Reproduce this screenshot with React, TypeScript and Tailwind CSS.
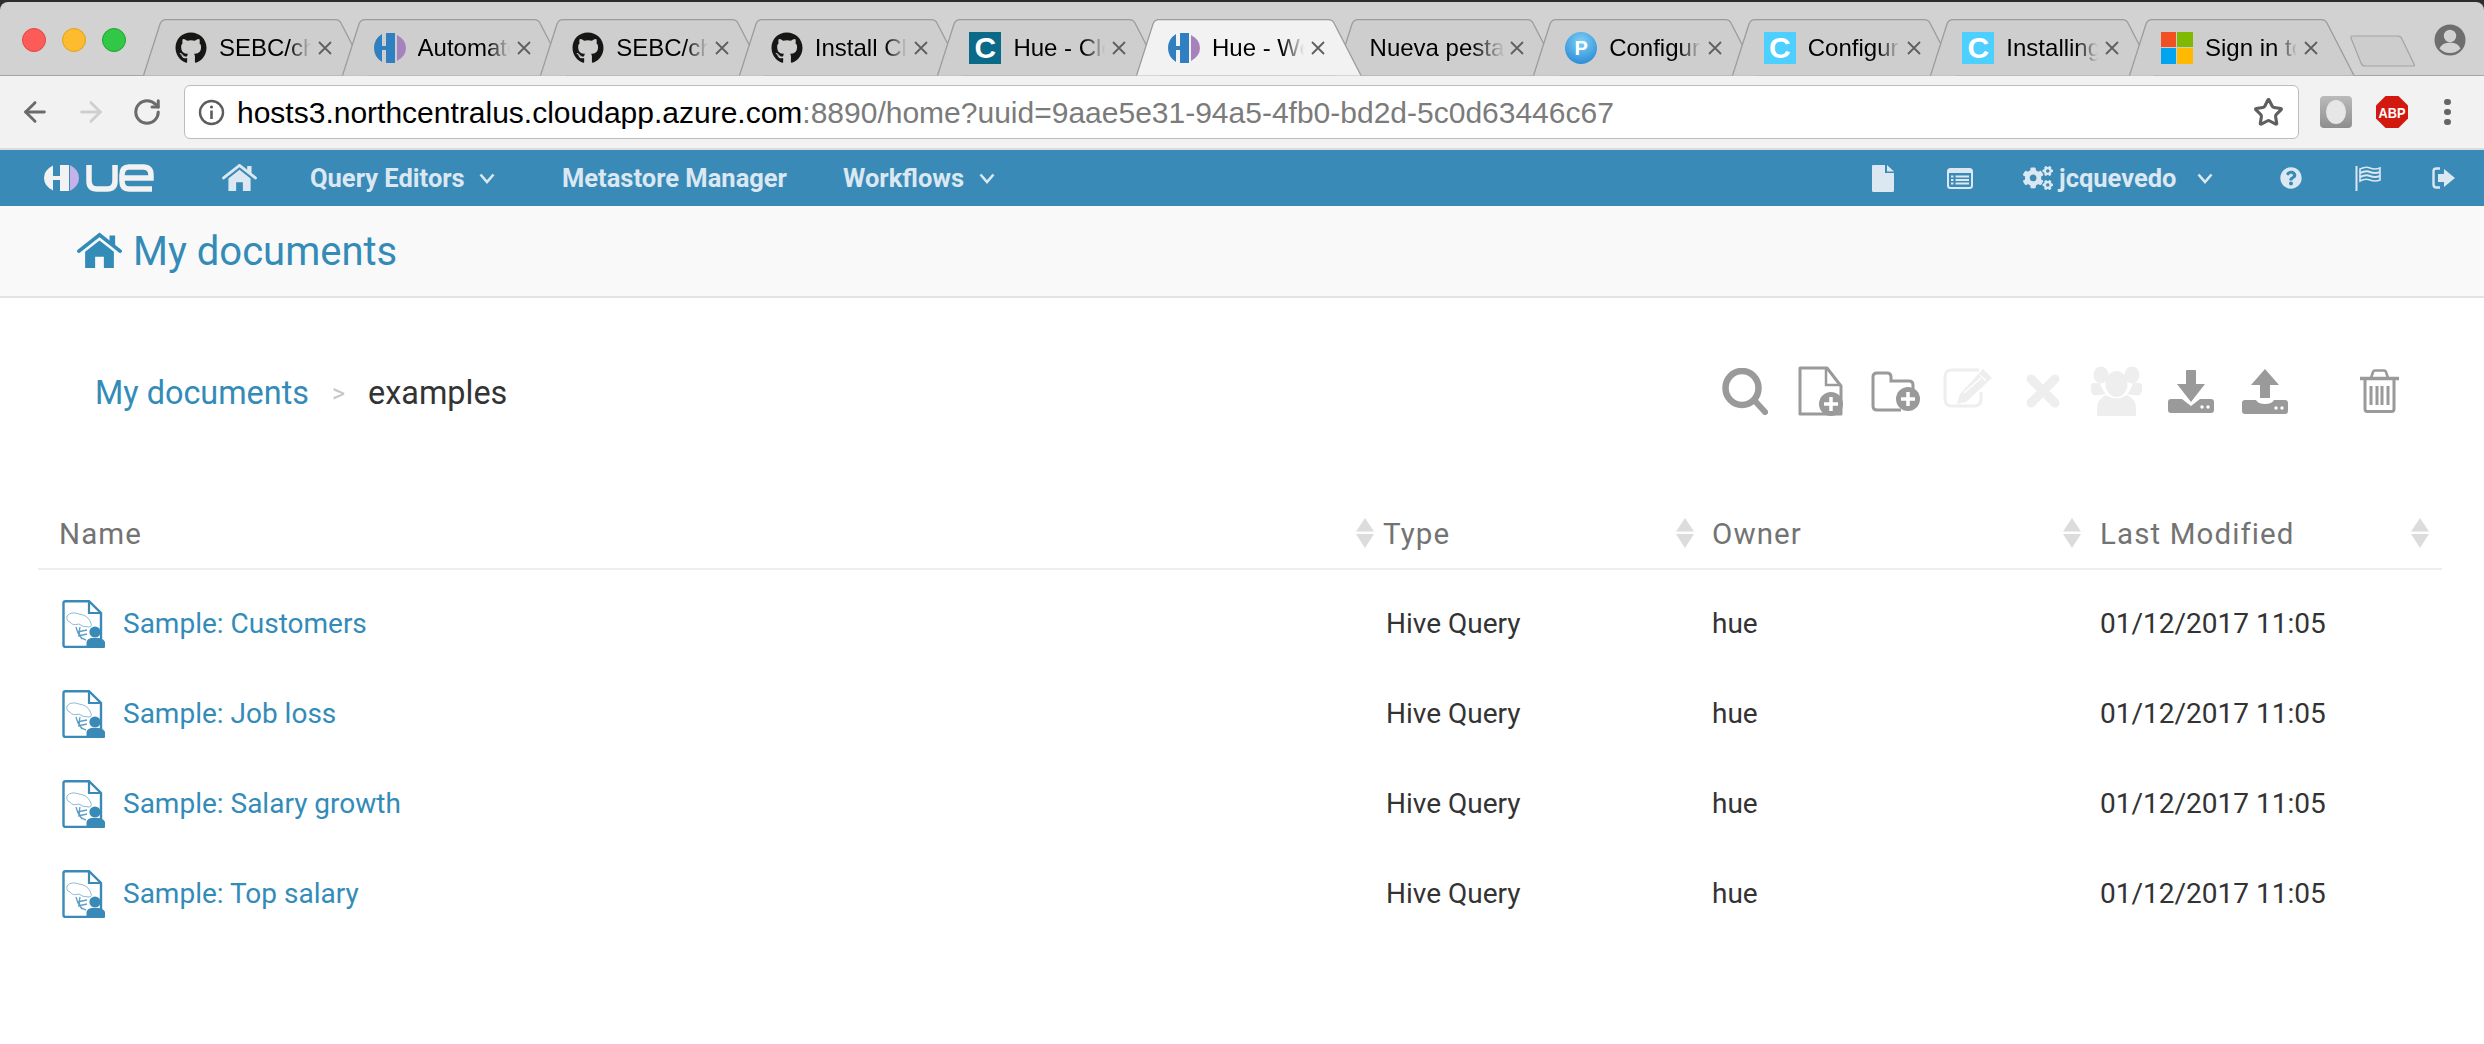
import React from "react";
import { FaGithub, FaCogs, FaQuestionCircle } from "react-icons/fa";
import { ArrowLeft, ArrowRight, RotateCw, Star } from "lucide-react";

const Hex = ({ size = 32, a = "#2f7fc1", b = "#a682bd" }: { size?: number; a?: string; b?: string }) => (
  <svg width={size} height={size} viewBox="0 0 32 32">
    <path d="M8 2 Q0 7 0 16 Q0 25 8 30 L8 18 L12 18 L12 31 L21 31 L21 1 L12 1 L12 14 L8 14 Z" fill={a} />
    <path d="M23 3 Q32 8 32 16 Q32 24 23 29 Z" fill={b} />
  </svg>
);

const HueLogo = () => (
  <svg width="111" height="28" viewBox="0 0 111 28" fill="none">
    <path d="M9 1.5 Q0 6 0 14 Q0 22 9 26.5 L9 16 L16 16 L16 27 L25 27 L25 1 L16 1 L16 12 L9 12 Z" fill="#f2f2f2" />
    <path d="M26 1 Q35 6 35 14 Q35 22 26 27 Z" fill="#c4b3e8" />
    <path d="M45 1 V17 Q45 25 53 25 H63 Q71 25 71 17 V1" stroke="#f2f2f2" strokeWidth="5.5" />
    <path d="M108 25 H85 Q78 25 78 17 V11 Q78 3 85 3 H99 Q107 3 107 11 V14 H78" stroke="#f2f2f2" strokeWidth="5.5" />
  </svg>
);

const HomeIcon = ({ w, h, color }: { w: number; h: number; color: string }) => (
  <svg width={w} height={h} viewBox="0 0 36 28">
    <path d="M1.5 14.5 L18 1.5 L34.5 14.5" fill="none" stroke={color} strokeWidth="3" strokeLinecap="round" />
    <path d="M26 2 H30.5 V10 L26 6.5 Z" fill={color} />
    <path d="M6.5 15 L18 6 L29.5 15 V28 H21.5 V19 H14.5 V28 H6.5 Z" fill={color} />
  </svg>
);

const Chevron = () => (
  <svg width="16" height="11" viewBox="0 0 16 11" fill="none" className="shrink-0">
    <path d="M1.5 1.5 L8 9 L14.5 1.5" stroke="#dbe8f1" strokeWidth="2.6" />
  </svg>
);

const Favicon = ({ kind }: { kind: string }) => {
  if (kind === "gh") return <FaGithub size={32} color="#161614" />;
  if (kind === "hue") return <Hex />;
  if (kind === "c1" || kind === "c2")
    return (
      <div className={`flex h-[32px] w-[32px] items-center justify-center text-[30px] font-bold leading-none text-white ${kind === "c1" ? "bg-[#0b6a87]" : "bg-[#4dd0ff]"}`}>
        C
      </div>
    );
  if (kind === "p")
    return (
      <div className="flex h-[32px] w-[32px] items-center justify-center rounded-full bg-[radial-gradient(circle_at_50%_30%,#7fd0f7,#1a7fd0)] text-[20px] font-bold leading-none text-white">
        P
      </div>
    );
  if (kind === "ms")
    return (
      <div className="grid h-[32px] w-[32px] grid-cols-2 gap-[1px]">
        <div className="bg-[#f25022]" />
        <div className="bg-[#7fba00]" />
        <div className="bg-[#00a4ef]" />
        <div className="bg-[#ffb900]" />
      </div>
    );
  return null;
};

const tabs = [
  { kind: "gh", title: "SEBC/chef-bcpc" },
  { kind: "hue", title: "Automated install" },
  { kind: "gh", title: "SEBC/chef-bcpc" },
  { kind: "gh", title: "Install Cloudera" },
  { kind: "c1", title: "Hue - Cloudera" },
  { kind: "hue", title: "Hue - Welcome", active: true },
  { kind: "", title: "Nueva pestaña" },
  { kind: "p", title: "Configure" },
  { kind: "c2", title: "Configure" },
  { kind: "c2", title: "Installing Hive" },
  { kind: "ms", title: "Sign in to your" },
];

const Tab = ({ kind, title, active }: { kind: string; title: string; active?: boolean }) => (
  <div className={`relative h-[56px] w-[198.6px] shrink-0 ${active ? "z-10" : ""}`}>
    <svg className="absolute left-0 top-0" width="226" height="57" viewBox="0 0 226 57">
      <path
        d="M0.5 56.5 L17 5 Q18.5 0.7 23 0.7 L192 0.7 Q197 0.7 198.5 5 L225 56.5"
        fill={active ? "#f2f2f2" : "#cecece"}
        stroke="#9c9c9c"
        strokeWidth="1.3"
      />
    </svg>
    <div className="absolute left-[32px] top-[13px] flex h-[31px] items-center">
      {kind ? (
        <div className="mr-[12px] h-[32px] w-[32px] shrink-0">
          <Favicon kind={kind} />
        </div>
      ) : null}
      <div className={`h-[34px] overflow-hidden whitespace-nowrap text-[24px] leading-[34px] text-black [mask-image:linear-gradient(to_right,black_76%,transparent)] ${kind ? "w-[92px]" : "ml-[3px] w-[135px]"}`}>
        {title}
      </div>
    </div>
    <svg className="absolute left-[175px] top-[22px]" width="14" height="14" viewBox="0 0 14 14">
      <path d="M1 1 L13 13 M13 1 L1 13" stroke="#5f5f5f" strokeWidth="1.8" />
    </svg>
  </div>
);

const NewFileIcon = () => (
  <svg width="45" height="50" viewBox="0 0 45 50" fill="none">
    <path d="M2 2 H29 L43 20 V48 H2 Z" stroke="#9a9a9a" strokeWidth="3" strokeLinejoin="round" />
    <path d="M28 3 V19 H42" stroke="#9a9a9a" strokeWidth="2.5" />
    <circle cx="33" cy="38" r="12" fill="#9a9a9a" />
    <path d="M33 31 V45 M26 38 H40" stroke="#fff" strokeWidth="3.5" />
  </svg>
);
const NewFolderIcon = () => (
  <svg width="49" height="41" viewBox="0 0 49 41" fill="none">
    <path d="M42 30 V14 Q42 10 38 10 H20 V6 Q20 2 16 2 H6 Q2 2 2 6 V35 Q2 39 6 39 H30" stroke="#9a9a9a" strokeWidth="3" />
    <circle cx="37" cy="28" r="12" fill="#9a9a9a" />
    <path d="M37 21 V35 M30 28 H44" stroke="#fff" strokeWidth="3.5" />
  </svg>
);
const EditIcon = () => (
  <svg width="50" height="40" viewBox="0 0 50 40" fill="none">
    <path d="M36 2 H9 Q2 2 2 9 V31 Q2 38 9 38 H31 Q38 38 38 31 V24" stroke="#eee" strokeWidth="3" />
    <path d="M40 1 L49 10 L23 34 L14 36 L17 26 Z" fill="#eee" />
    <path d="M37 7 L43 13 M21 25 L38 10" stroke="#fff" strokeWidth="1.3" />
  </svg>
);
const XIcon = () => (
  <svg width="34" height="34" viewBox="0 0 34 34">
    <path d="M5 5 L29 29 M29 5 L5 29" stroke="#eee" strokeWidth="9" strokeLinecap="round" />
  </svg>
);
const UsersIcon = () => (
  <svg width="53" height="50" viewBox="0 0 53 50">
    <ellipse cx="11" cy="9" rx="7.5" ry="8.5" fill="#eee" />
    <ellipse cx="42" cy="9" rx="7.5" ry="8.5" fill="#eee" />
    <path d="M1 18 Q5 16 10 17 Q12 24 16 28 Q8 30 3 29 Q0 25 1 18 Z" fill="#eee" />
    <path d="M52 18 Q48 16 43 17 Q41 24 37 28 Q45 30 50 29 Q53 25 52 18 Z" fill="#eee" />
    <ellipse cx="26.5" cy="18" rx="11" ry="13" fill="#eee" />
    <path d="M7 50 V42 Q7 33 16 29 Q26 36 37 29 Q46 33 46 42 V50 Z" fill="#eee" />
  </svg>
);
const DownloadIcon = () => (
  <svg width="46" height="43" viewBox="0 0 46 43">
    <path d="M18 1 Q18 0 19 0 H27 Q28 0 28 1 V14 H37 L23 32 L9 14 H18 Z" fill="#9a9a9a" />
    <path d="M0 32 Q0 29 3 29 H14 L23 36 L32 29 H43 Q46 29 46 32 V40 Q46 43 43 43 H3 Q0 43 0 40 Z" fill="#9a9a9a" />
    <circle cx="34" cy="37" r="1.7" fill="#fff" />
    <circle cx="40" cy="37" r="1.7" fill="#fff" />
  </svg>
);
const UploadIcon = () => (
  <svg width="46" height="45" viewBox="0 0 46 45">
    <path d="M23 0 L37 16 H28 V29 H18 V16 H9 Z" fill="#9a9a9a" />
    <path d="M0 34 Q0 31 3 31 H14 Q16 35 23 35 Q30 35 32 31 H43 Q46 31 46 34 V42 Q46 45 43 45 H3 Q0 45 0 42 Z" fill="#9a9a9a" />
    <circle cx="34" cy="39" r="1.7" fill="#fff" />
    <circle cx="40" cy="39" r="1.7" fill="#fff" />
  </svg>
);
const TrashIcon = () => (
  <svg width="39" height="44" viewBox="0 0 39 44" fill="none">
    <path d="M0 9.5 H39" stroke="#9a9a9a" strokeWidth="3.4" />
    <path d="M11 9 L13 3 Q13.5 1.5 15 1.5 H24 Q25.5 1.5 26 3 L28 9" stroke="#9a9a9a" strokeWidth="2.6" />
    <path d="M5 10 V40 Q5 42.5 7.5 42.5 H31.5 Q34 42.5 34 40 V10" stroke="#9a9a9a" strokeWidth="3" />
    <path d="M11 17 V36 M17 17 V36 M22 17 V36 M28 17 V36" stroke="#9a9a9a" strokeWidth="3" />
  </svg>
);
const SearchIcon = () => (
  <svg width="46" height="47" viewBox="0 0 46 47" fill="none">
    <ellipse cx="20" cy="20" rx="16.5" ry="17" stroke="#9a9a9a" strokeWidth="6.5" />
    <path d="M33 33 L43 44" stroke="#9a9a9a" strokeWidth="6" strokeLinecap="round" />
  </svg>
);

const SortArrows = () => (
  <svg width="18" height="30" viewBox="0 0 18 30" className="shrink-0">
    <path d="M9 0 L18 13.5 H0 Z" fill="#dcdcdc" />
    <path d="M0 16 H18 L9 30 Z" fill="#dcdcdc" />
  </svg>
);

const HiveDoc = () => (
  <svg width="44" height="48" viewBox="0 0 44 48" fill="none" className="shrink-0">
    <path d="M1.5 3 Q1.5 1.2 3.5 1.2 H27 L39 13 V42" stroke="#3a8ab8" strokeWidth="2.4" />
    <path d="M1.5 3 V45 Q1.5 47 3.5 47 H27" stroke="#3a8ab8" strokeWidth="2.4" />
    <path d="M27 2 V13 H39" stroke="#3a8ab8" strokeWidth="2.2" />
    <path d="M5 16 Q9 11 17 14 Q25 15 28 21 Q31 27 27 27 Q20 27 17 24 Q10 26 8 22 Q4 21 5 16 Z" stroke="#8dbcd7" strokeWidth="1" />
    <path d="M14 27 Q17 39 24 40 M18 27 Q16 35 20 39 M15 32 L25 30 M16 36 L25 34" stroke="#5f9fc4" strokeWidth="1.3" />
    <circle cx="33" cy="32" r="5.6" fill="#3a8ab8" />
    <path d="M24.5 48 V42 Q25 39 29 38 H37 Q42 39 43 42 V47 Q43 48 42 48 Z" fill="#3a8ab8" />
  </svg>
);

const rows = ["Sample: Customers", "Sample: Job loss", "Sample: Salary growth", "Sample: Top salary"];

const navText = "text-[25.5px] font-bold leading-[58px] text-[#dbe8f1] whitespace-nowrap";

export default function App() {
  return (
    <div className="min-h-[1044px] w-[2484px] overflow-hidden bg-white font-['Roboto',sans-serif]">
      {/* Browser chrome */}
      <div className="bg-[#2d2d2d] pt-[2px] font-['Liberation_Sans',sans-serif]">
        <div className="relative flex h-[74px] items-end border-b border-[#a6a6a6] rounded-t-[8px] bg-[#d2d2d2] pl-[143px]">
          <div className="absolute left-[22px] top-[26px] flex gap-[16px]">
            <div className="h-[24px] w-[24px] rounded-full border border-[#e2463f] bg-[#fc5b57]" />
            <div className="h-[24px] w-[24px] rounded-full border border-[#e1a116] bg-[#fdbc2f]" />
            <div className="h-[24px] w-[24px] rounded-full border border-[#17a82c] bg-[#33c748]" />
          </div>
          {tabs.map((t, i) => (
            <Tab key={i} kind={t.kind} title={t.title} active={t.active} />
          ))}
          <svg className="absolute left-[2350px] top-[33px]" width="66" height="32" viewBox="0 0 66 32" fill="none">
            <path d="M2 1 H48 Q51 1 52 4 L64.5 30 Q65 31 63 31 H15 Q12 31 11 28 L1 3 Q0.5 1 2 1 Z" fill="#cdcdcd" stroke="#a4a4a4" strokeWidth="1.2" />
          </svg>
          <svg className="absolute left-[2434px] top-[22px]" width="32" height="32" viewBox="0 0 32 32">
            <circle cx="16" cy="16" r="15.5" fill="#6e6e6e" />
            <circle cx="16" cy="12" r="6.2" fill="#d2d2d2" />
            <path d="M5.5 24.5 Q8 18.5 16 18.5 Q24 18.5 26.5 24.5 Q22 29 16 29 Q10 29 5.5 24.5 Z" fill="#d2d2d2" />
          </svg>
        </div>
        <div className="relative flex h-[74px] items-center border-b-2 border-[#dcdcdc] bg-[#f2f2f2]">
          <div className="flex w-[184px] shrink-0 items-center pl-[19px]">
            <ArrowLeft size={32} strokeWidth={2.2} color="#6b6b6b" />
            <ArrowRight size={32} strokeWidth={2.2} color="#cfcfcf" className="ml-[24px]" />
            <RotateCw size={30} strokeWidth={2.4} color="#6b6b6b" className="ml-[25px]" />
          </div>
          <div className="flex h-[54px] w-[2115px] shrink-0 items-center rounded-[6px] border border-[#bcbcbc] bg-white pl-[13px] pr-[14px]">
            <svg width="27" height="27" viewBox="0 0 27 27" fill="none" className="shrink-0">
              <circle cx="13.5" cy="13.5" r="11.5" stroke="#5d5d5d" strokeWidth="2.4" />
              <circle cx="13.5" cy="8" r="1.6" fill="#5d5d5d" />
              <path d="M13.5 11.5 V20" stroke="#5d5d5d" strokeWidth="2.6" />
            </svg>
            <div className="ml-[12px] whitespace-nowrap text-[30px] text-[#7b7b7b]">
              <span className="text-black">hosts3.northcentralus.cloudapp.azure.com</span>:8890/home?uuid=9aae5e31-94a5-4fb0-bd2d-5c0d63446c67
            </div>
            <Star size={31} strokeWidth={2.4} color="#5f5f5f" className="ml-auto shrink-0" />
          </div>
          <div className="ml-[21px] flex h-[32px] w-[32px] shrink-0 items-center justify-center rounded-[4px] bg-[linear-gradient(#bbb,#8e8e8e)]">
            <div className="h-[24px] w-[20px] rounded-[50%] bg-[#e6e6e6]" />
          </div>
          <svg className="ml-[24px] shrink-0" width="32" height="32" viewBox="0 0 32 32">
            <path d="M9.5 0 H22.5 L32 9.5 V22.5 L22.5 32 H9.5 L0 22.5 V9.5 Z" fill="#d3190f" />
            <text x="16" y="22" fill="#fff" fontSize="15.5" fontWeight="700" textAnchor="middle" fontFamily="Liberation Sans, sans-serif" textLength="27" lengthAdjust="spacingAndGlyphs">ABP</text>
          </svg>
          <div className="ml-[36px] flex shrink-0 flex-col gap-[3.5px]">
            <div className="h-[6.5px] w-[6.5px] rounded-full bg-[#666]" />
            <div className="h-[6.5px] w-[6.5px] rounded-full bg-[#666]" />
            <div className="h-[6.5px] w-[6.5px] rounded-full bg-[#666]" />
          </div>
        </div>
      </div>

      {/* Hue nav */}
      <div className="flex h-[56px] items-center bg-[#3a8ab8] pr-[29px]">
        <div className="ml-[44px] shrink-0"><HueLogo /></div>
        <div className="ml-[67px] shrink-0 -translate-y-[1px]"><HomeIcon w={35} h={27} color="#dbe8f1" /></div>
        <div className={`ml-[53px] flex w-[185px] shrink-0 items-center justify-between ${navText}`}>
          Query Editors <Chevron />
        </div>
        <div className={`ml-[67px] w-[228px] shrink-0 ${navText}`}>Metastore Manager</div>
        <div className={`ml-[53px] flex w-[152px] shrink-0 items-center justify-between ${navText}`}>
          Workflows <Chevron />
        </div>
        <div className="ml-auto flex items-center">
          <svg width="22" height="27" viewBox="0 0 22 27" className="shrink-0">
            <path d="M1 0 H13 V8 H22 V25.5 Q22 27 20.5 27 H1.5 Q0 27 0 25.5 V1 Q0 0 1 0 Z M15 0 L22 6.5 H15 Z" fill="#dbe8f1" />
          </svg>
          <svg className="ml-[53px] shrink-0" width="26" height="21" viewBox="0 0 26 21" fill="none">
            <rect x="1" y="1" width="24" height="19" rx="2.5" stroke="#dbe8f1" strokeWidth="2" />
            <path d="M1 2 H25 V5 H1 Z" fill="#dbe8f1" />
            <path d="M4 8.5 H6.5 M8.5 8.5 H22 M4 12 H6.5 M8.5 12 H22 M4 15.5 H6.5 M8.5 15.5 H22" stroke="#dbe8f1" strokeWidth="1.8" />
          </svg>
          <FaCogs className="ml-[50px] shrink-0" size={30} color="#dbe8f1" />
          <div className={`ml-[6px] w-[119px] shrink-0 ${navText}`}>jcquevedo</div>
          <div className="ml-[19px] shrink-0"><Chevron /></div>
          <FaQuestionCircle className="ml-[67px] shrink-0" size={22} color="#dbe8f1" />
          <svg className="ml-[53px] shrink-0" width="26" height="26" viewBox="0 0 26 26" fill="none">
            <path d="M1.5 1 V26" stroke="#dbe8f1" strokeWidth="2" />
            <path d="M5 4 Q11 1 15 3 Q20 5 25 3 V15 Q20 17 15 15 Q10 13 5 16 Z" stroke="#dbe8f1" strokeWidth="1.6" />
            <path d="M5 8 Q11 5 15 7 Q20 9 25 7 M5 12 Q11 9 15 11 Q20 13 25 11" stroke="#dbe8f1" strokeWidth="2" />
          </svg>
          <svg className="ml-[51px] shrink-0" width="23" height="22" viewBox="0 0 23 22" fill="none">
            <path d="M8 1.5 H4.5 Q1.5 1.5 1.5 4.5 V17.5 Q1.5 20.5 4.5 20.5 H8" stroke="#dbe8f1" strokeWidth="2.4" />
            <path d="M6 7 H12 V2 L23 11 L12 20 V15 H6 Z" fill="#dbe8f1" />
          </svg>
        </div>
      </div>

      {/* Sub header */}
      <div className="flex h-[92px] items-center border-b-2 border-[#e3e3e3] bg-[#f9f9f9] pb-[2px] pl-[77px]">
        <HomeIcon w={45} h={37} color="#338bb8" />
        <div className="ml-[11px] translate-y-[2px] whitespace-nowrap text-[40px] leading-none text-[#338bb8]">My documents</div>
      </div>

      {/* Breadcrumb + actions */}
      <div className="mt-[42px] flex h-[102px] items-center pr-[85px]">
        <div className="ml-[95px] flex items-center pt-[4px] text-[32.4px] leading-none">
          <span className="text-[#338bb8]">My documents</span>
          <span className="ml-[23px] text-[25px] text-[#c8c8c8]">&gt;</span>
          <span className="ml-[23px] text-[#333]">examples</span>
        </div>
        <div className="ml-auto flex items-center">
          <SearchIcon />
          <div className="ml-[30px]"><NewFileIcon /></div>
          <div className="ml-[28px]"><NewFolderIcon /></div>
          <div className="ml-[23px] -translate-y-[3px]"><EditIcon /></div>
          <div className="ml-[33px]"><XIcon /></div>
          <div className="ml-[30px]"><UsersIcon /></div>
          <div className="ml-[25px]"><DownloadIcon /></div>
          <div className="ml-[28px]"><UploadIcon /></div>
          <div className="ml-[72px]"><TrashIcon /></div>
        </div>
      </div>

      {/* Table */}
      <div className="ml-[38px] w-[2404px]">
        <div className="mt-[66px] grid h-[62px] grid-cols-[1340px_322px_390px_352px] items-center border-b-2 border-[#eee] pb-[10px] text-[29.5px] tracking-[1.1px] text-[#737373]">
          <div className="flex items-center justify-between pl-[21px] pr-[4px]"><span className="translate-y-[1px]">Name</span> <SortArrows /></div>
          <div className="flex items-center justify-between pl-[5px] pr-[6px]"><span className="translate-y-[1px]">Type</span> <SortArrows /></div>
          <div className="flex items-center justify-between pl-[12px] pr-[9px]"><span className="translate-y-[1px]">Owner</span> <SortArrows /></div>
          <div className="flex items-center justify-between pl-[10px] pr-[13px]"><span className="translate-y-[1px]">Last Modified</span> <SortArrows /></div>
        </div>
        <div className="pt-[9px]">
          {rows.map((r) => (
            <div key={r} className="grid h-[90px] grid-cols-[1340px_322px_390px_352px] items-center text-[28px] text-[#333]">
              <div className="flex items-center pl-[24px]">
                <HiveDoc />
                <span className="ml-[17px] text-[#338bb8]">{r}</span>
              </div>
              <div className="pl-[8px]">Hive Query</div>
              <div className="pl-[12px]">hue</div>
              <div className="pl-[10px]">01/12/2017 11:05</div>
            </div>
          ))}
        </div>
      </div>
    </div>
  );
}
